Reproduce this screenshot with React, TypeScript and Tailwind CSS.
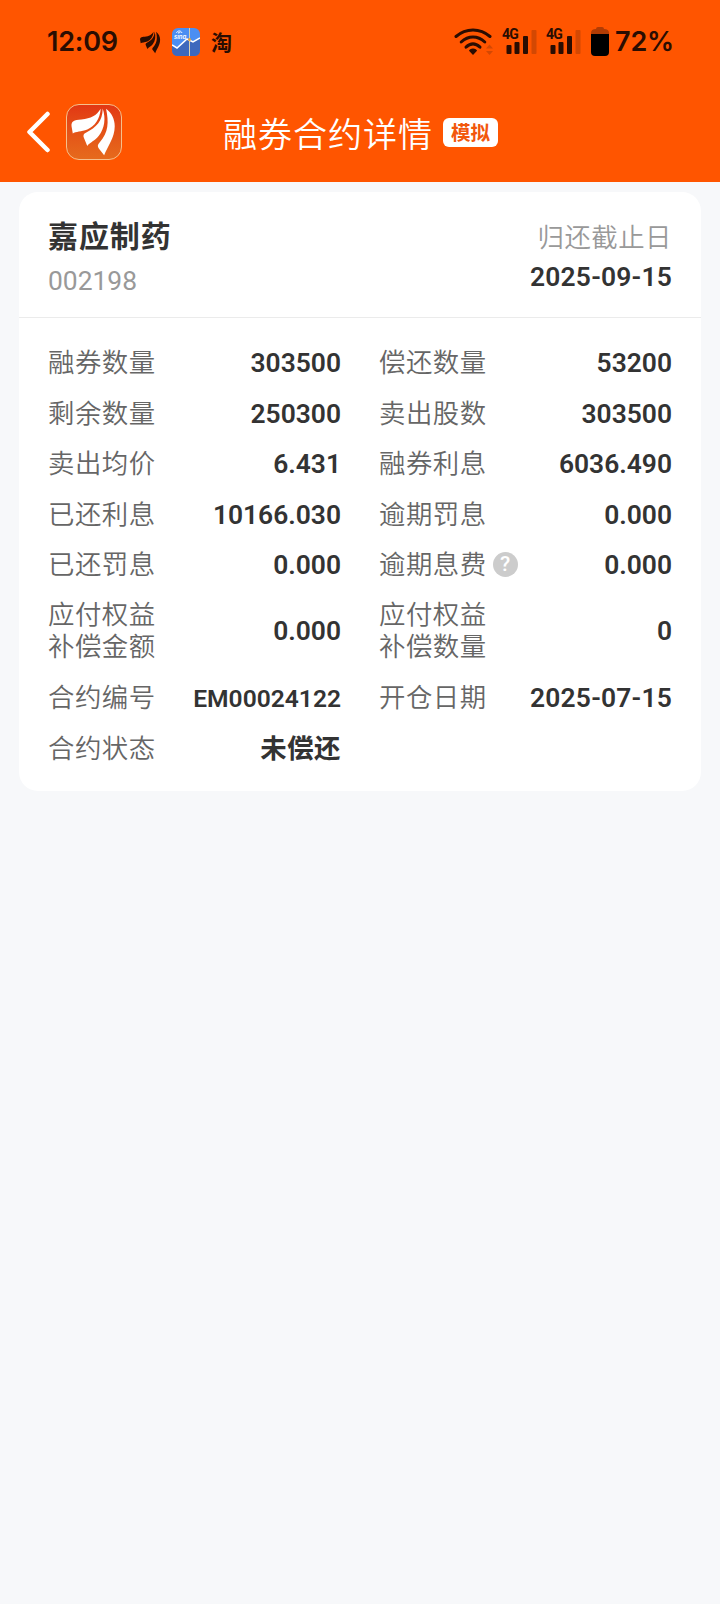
import type { ReactNode } from "react";
import clsx from "clsx";

type Field = {
  label: string[];
  value: string;
  help?: boolean;
  small?: boolean;
};

const FIELDS: Field[] = [
  { label: ["融券数量"], value: "303500" },
  { label: ["偿还数量"], value: "53200" },
  { label: ["剩余数量"], value: "250300" },
  { label: ["卖出股数"], value: "303500" },
  { label: ["卖出均价"], value: "6.431" },
  { label: ["融券利息"], value: "6036.490" },
  { label: ["已还利息"], value: "10166.030" },
  { label: ["逾期罚息"], value: "0.000" },
  { label: ["已还罚息"], value: "0.000" },
  { label: ["逾期息费"], value: "0.000", help: true },
  { label: ["应付权益", "补偿金额"], value: "0.000" },
  { label: ["应付权益", "补偿数量"], value: "0" },
  { label: ["合约编号"], value: "EM00024122", small: true },
  { label: ["开仓日期"], value: "2025-07-15" },
  { label: ["合约状态"], value: "未偿还" },
];

function Feather({ className }: { className?: string }) {
  return (
    <svg viewBox="0 0 56 56" className={className} fill="currentColor">
      <path d="M35 4C30.500 11 25 14.300 15 15C7 15.500 4.300 17 4.700 22L6 29.500C9 27.500 15 28 21 25.500C29 22 34 15 35 4Z" />
      <path d="M37 3.500C37 17 30 23 20 28.500C17 30 16.500 31.500 17.500 34L21 42.500C24 38.500 29 37.500 33 32C39 24 40.500 14 37 3.500Z" />
      <path d="M40.500 4C43.500 18 43 29 34 38.500C31.500 41 31.500 43 33 45L38.500 52C42 43 49.500 34 49.500 22C49.500 15 46.500 8.500 40.500 4Z" />
    </svg>
  );
}

function Wifi() {
  return (
    <svg viewBox="0 0 40 28" className="h-7 w-10" fill="none">
      <g stroke="#2a0d02" strokeWidth="3" strokeLinecap="round">
        <path d="M2 8.500C12 -.2 26 -.2 36 8.500" />
        <path d="M7.200 14C14.500 7.300 23.500 7.300 30.800 14" />
        <path d="M12 19.200C16.500 15 21.500 15 26 19.200" />
      </g>
      <path d="M19 20.500C21 20.500 23 21.700 23 22.700L19 27L15 22.700C15 21.700 17 20.500 19 20.500Z" fill="#2a0d02" />
      <path d="M32 20.500L35.500 16.500L39 20.500ZM32 23L35.500 27L39 23Z" fill="#d34803" />
    </svg>
  );
}

function Signal() {
  return (
    <div className="relative h-[26px] w-9">
      <span className="absolute -top-[3px] left-0 font-['Roboto',sans-serif] text-[14px] leading-4 font-bold tracking-[-0.8px]">
        4G
      </span>
      <svg viewBox="0 0 36 26" className="h-full w-full">
        <rect x="4.500" y="16" width="5" height="9" rx="1" fill="#2a0d02" />
        <rect x="12.500" y="13" width="5" height="12" rx="1" fill="#2a0d02" />
        <rect x="21" y="7" width="5" height="18" rx="1" fill="#2a0d02" />
        <rect x="29.500" y="1" width="5" height="24" rx="1" fill="#d34803" />
      </svg>
    </div>
  );
}

function StatusBar() {
  return (
    <div className="flex h-[84px] items-center pr-[46px] pl-[47px] font-['Inter',sans-serif] text-[27px] font-semibold text-[#2a0d02]">
      <span className="w-[91px] tracking-[-0.2px]">12:09</span>
      <Feather className="h-[25px] w-[25px]" />
      <svg viewBox="0 0 28 28" className="mb-px ml-[9px] h-7 w-7">
        <rect width="28" height="28" rx="6" fill="#4b8ef2" />
        <path d="M0 17L5 20L15 10L21 14L28 10V22Q28 28 22 28H6Q0 28 0 22Z" fill="#3d68bd" />
        <path d="M0 17L5 20L15 11L21 14L28 10" fill="none" stroke="#fff" strokeWidth="1.500" />
        <path d="M17.500 0V28" stroke="#d8cfae" strokeWidth="1" />
        <circle cx="17.500" cy="11.500" r="1.500" fill="#e9a63a" />
        <path d="M4.500 5C5 2.500 9 2 10 5M6 5C6.500 4 8 4 8.500 5" fill="none" stroke="#fff" strokeWidth="0.900" />
        <text x="2" y="10.500" fontSize="6" fontStyle="italic" fill="#fff">
          sina
        </text>
      </svg>
      <span className="ml-[11px] pb-[3px] font-['Noto_Sans_CJK_SC',sans-serif] text-[21px] leading-7 font-bold">淘</span>
      <div className="ml-auto flex items-center">
        <Wifi />
        <div className="ml-2 flex gap-2">
          <Signal />
          <Signal />
        </div>
        <svg viewBox="0 0 18 29" className="mb-[2px] ml-[9px] h-[29px] w-[18px]">
          <path d="M5 2Q5 0 7 0H11Q13 0 13 2Q18 2 18 6V8H0V6Q0 2 5 2Z" fill="#b23c04" />
          <path d="M0 7H18V25Q18 29 14 29H4Q0 29 0 25Z" fill="#000" />
        </svg>
        <span className="ml-[6px] tracking-[-0.2px]">72%</span>
      </div>
    </div>
  );
}

function NavBar() {
  return (
    <div className="grid h-[98px] grid-cols-[223px_1fr] items-center pb-[2px] text-white">
      <div className="flex items-center pl-[26px]">
        <svg viewBox="0 0 26 42" className="h-[42px] w-[26px]" fill="none">
          <path
            d="M21.500 3L3.500 21L21.500 39"
            stroke="currentColor"
            strokeWidth="4.500"
            strokeLinecap="round"
            strokeLinejoin="round"
          />
        </svg>
        <div className="ml-[14px] h-14 w-14 rounded-[13px] border border-[#f6c08c] bg-linear-to-b from-[#e23714] to-[#e66a1c]">
          <Feather className="h-full w-full" />
        </div>
      </div>
      <div className="flex items-center">
        <h1 className="pt-[5px] text-[34px] leading-[50px] font-[350] tracking-[1px]">融券合约详情</h1>
        <span className="mt-px ml-[10px] flex h-[29px] w-[55px] items-center justify-center rounded-[6px] bg-white pt-[2px] text-[19.500px] font-bold text-[#f2570c]">
          模拟
        </span>
      </div>
    </div>
  );
}

function Label({ children }: { children: ReactNode }) {
  return <span className="block text-[26.400px] leading-8 font-[350] tracking-[0.5px] text-[#666]">{children}</span>;
}

function FieldRow({ field }: { field: Field }) {
  return (
    <div className="flex items-center justify-between">
      <div className="flex items-center">
        <div className="-ml-px">
          {field.label.map((line) => (
            <Label key={line}>{line}</Label>
          ))}
        </div>
        {field.help && (
          <span className="ml-[6px] flex h-[25px] w-[25px] items-center justify-center rounded-full bg-[#ccc] text-[21px] leading-none font-medium text-white">
            ?
          </span>
        )}
      </div>
      <span
        className={clsx(
          "leading-8 font-semibold text-[#333]",
          field.small ? "pt-px text-[24.600px]" : "text-[26.400px]",
          field.value.includes("-") && "tracking-[0.2px]",
          field.value === "未偿还" && "tracking-[0.5px]",
        )}
      >
        {field.value}
      </span>
    </div>
  );
}

export default function App() {
  return (
    <div className="min-h-[1604px] w-[720px] bg-[#f7f8fa] font-['Roboto','Noto_Sans_CJK_SC',sans-serif]">
      <header className="bg-[#ff5500]">
        <StatusBar />
        <NavBar />
      </header>
      <main className="px-[19px] pt-[10px]">
        <section className="h-[599px] rounded-[19px] bg-white">
          <div className="flex h-[126px] justify-between border-b border-[#ebebeb] pt-[25px] pr-[29px] pl-[29px]">
            <div>
              <h2 className="text-[30px] leading-10 font-bold tracking-[0.9px] text-[#333]">嘉应制药</h2>
              <p className="mt-[8px] text-[26.400px] leading-8 text-[#999]">002198</p>
            </div>
            <div className="text-right">
              <p className="pt-[5px] text-[26.400px] leading-8 font-[350] tracking-[0.5px] text-[#999]">归还截止日</p>
              <p className="mt-[7px] text-[26.400px] leading-8 font-semibold tracking-[0.2px] text-[#333]">2025-09-15</p>
            </div>
          </div>
          <div className="grid grid-cols-2 gap-x-[39px] gap-y-[18.400px] pt-[29.400px] pr-[29px] pl-[30px]">
            {FIELDS.map((field) => (
              <FieldRow key={field.label.join("")} field={field} />
            ))}
          </div>
        </section>
      </main>
    </div>
  );
}
